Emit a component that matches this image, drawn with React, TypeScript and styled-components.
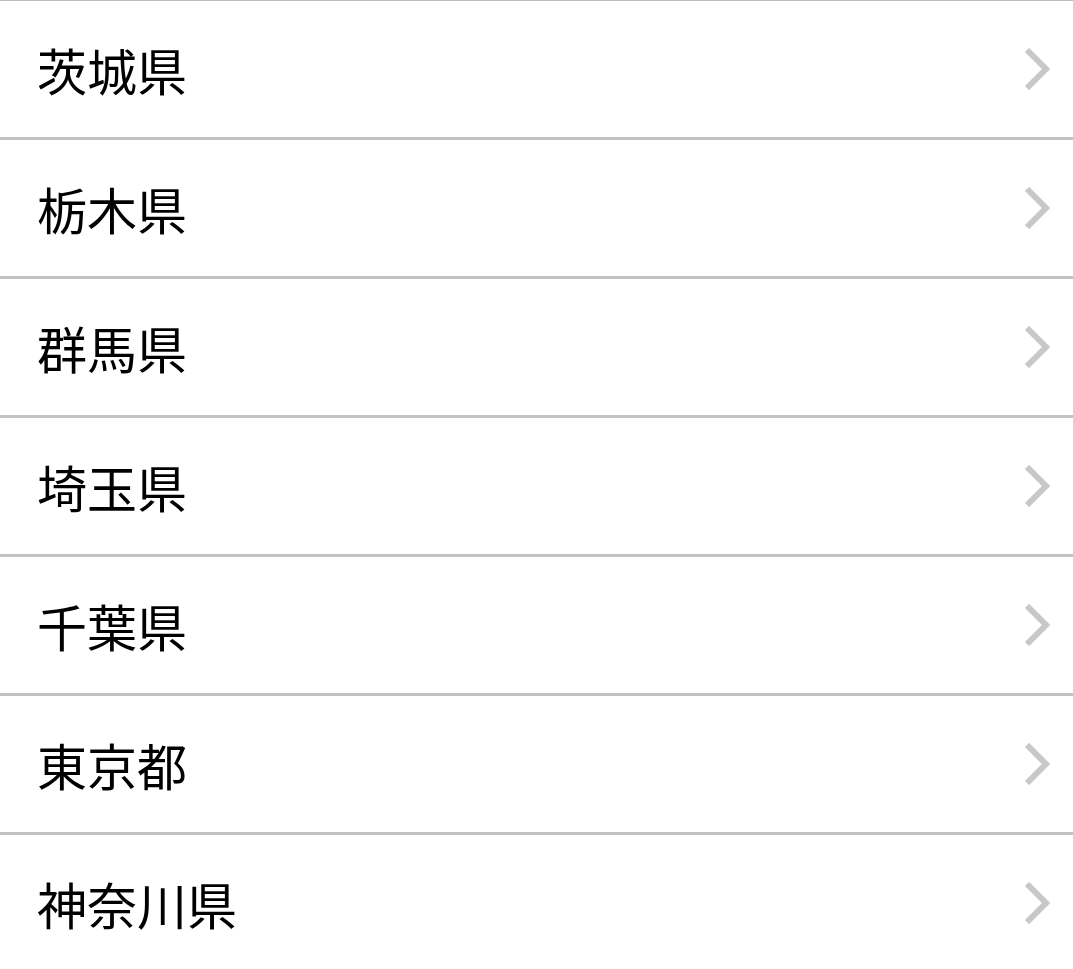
import React from 'react';
import styled, { createGlobalStyle } from 'styled-components';

const GlobalStyle = createGlobalStyle`
  body {
    margin: 0;
    background: #ffffff;
    font-family: "Noto Sans CJK JP", "Noto Sans", sans-serif;
  }
`;

const List = styled.ul`
  list-style: none;
  margin: 0;
  padding: 0;
  border-top: 1px solid #bdbdbd;
`;

const Row = styled.li`
  display: flex;
  align-items: center;
  justify-content: space-between;
  height: 136px;
  padding: 0 23px 0 37px;
  border-bottom: 3px solid #c2c2c2;
  color: #000000;
  cursor: pointer;
`;

const Name = styled.span`
  font-size: 50px;
  font-weight: 400;
  line-height: 1;
  letter-spacing: 0;
`;

const Chevron = styled.svg`
  width: 26px;
  height: 42px;
  flex-shrink: 0;
`;

const prefectures = ['茨城県', '栃木県', '群馬県', '埼玉県', '千葉県', '東京都', '神奈川県'];

export default function App() {
  return (
    <>
      <GlobalStyle />
      <List>
        {prefectures.map((p) => (
          <Row key={p}>
            <Name>{p}</Name>
            <Chevron viewBox="0 0 26 42">
              <polyline
                points="3,2 22,21 3,40"
                fill="none"
                stroke="#c8c8c8"
                strokeWidth="6"
              />
            </Chevron>
          </Row>
        ))}
      </List>
    </>
  );
}
